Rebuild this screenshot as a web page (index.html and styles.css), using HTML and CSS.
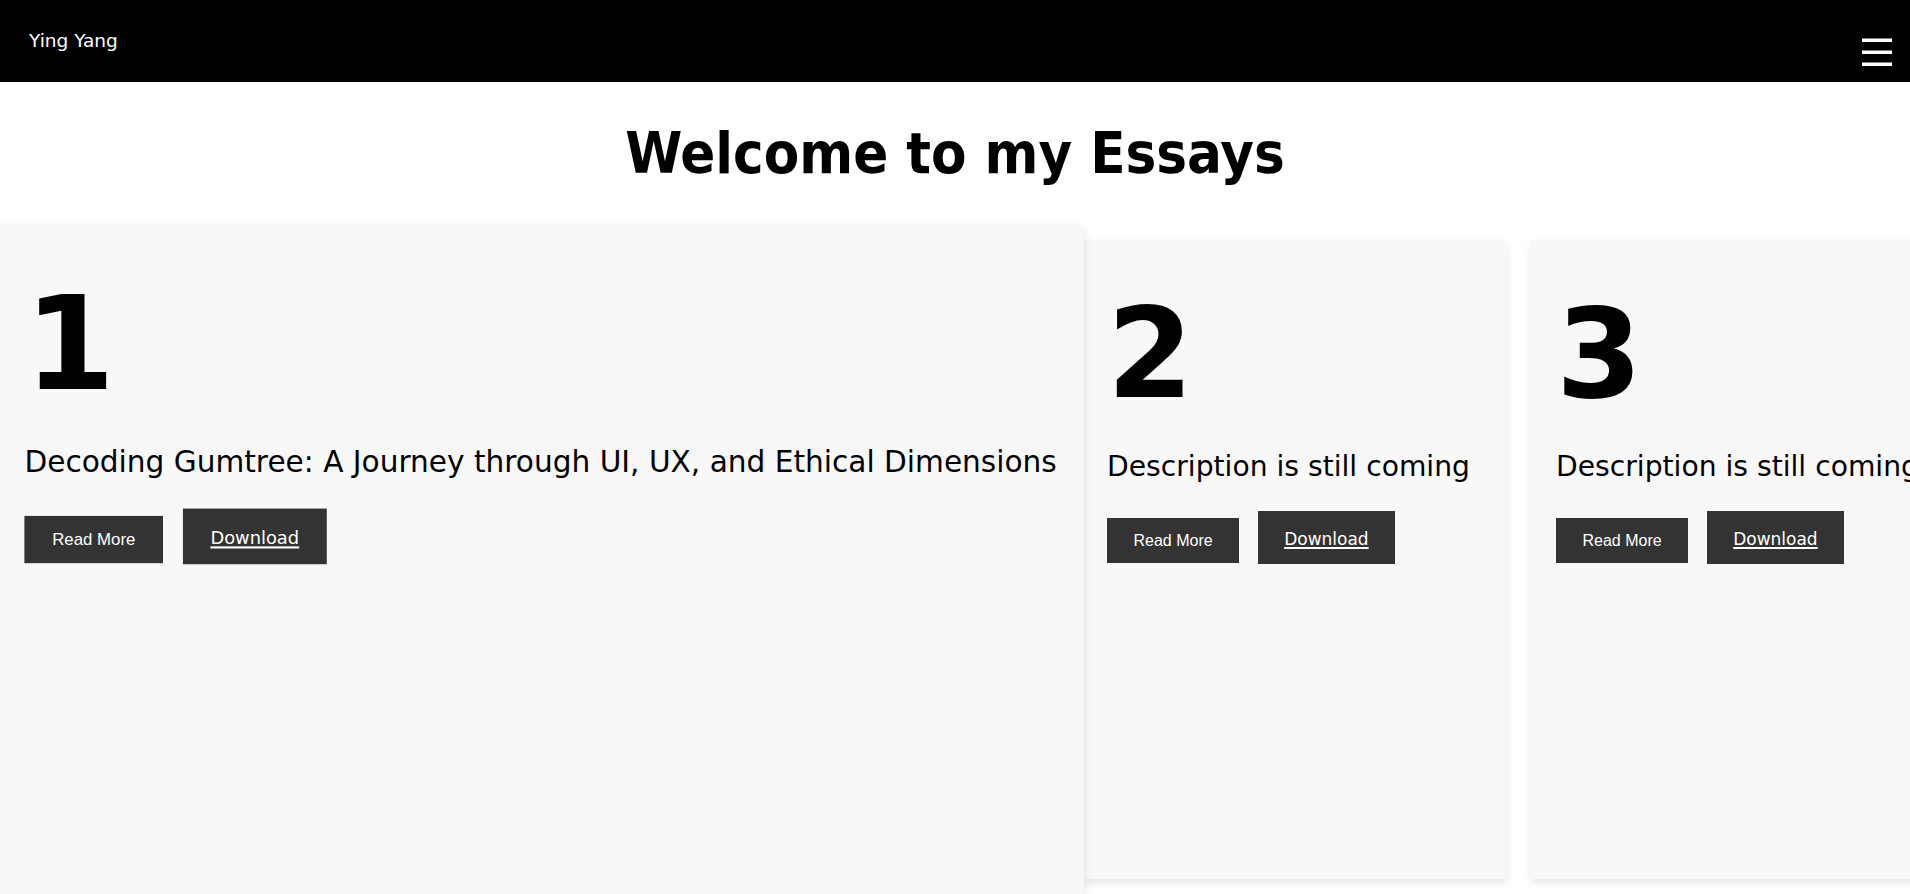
FILE: index.html
```html
<!DOCTYPE html>
<html lang="en">
<head>
<meta charset="utf-8">
<title>Ying Yang - Essays</title>
<link rel="stylesheet" href="styles.css">
</head>
<body>
<nav class="navbar">
  <a class="brand" href="#">Ying Yang</a>
  <button class="menu-toggle" aria-label="Menu">
    <svg width="30" height="28" viewBox="0 0 30 28" aria-hidden="true">
      <rect x="0" y="0.5" width="30" height="3.5" fill="#fff"/>
      <rect x="0" y="12.5" width="30" height="3.5" fill="#fff"/>
      <rect x="0" y="24.5" width="30" height="3.5" fill="#fff"/>
    </svg>
  </button>
</nav>

<main>
  <h1 class="page-title">Welcome to my Essays</h1>

  <section class="cards">
    <article class="card card--wide card--active">
      <div class="card-number">1</div>
      <p class="card-desc">Decoding Gumtree: A Journey through UI, UX, and Ethical Dimensions</p>
      <div class="card-actions">
        <button class="btn btn-read">Read More</button>
        <button class="btn btn-download"><a href="#">Download</a></button>
      </div>
    </article>

    <article class="card">
      <div class="card-number">2</div>
      <p class="card-desc">Description is still coming</p>
      <div class="card-actions">
        <button class="btn btn-read">Read More</button>
        <button class="btn btn-download"><a href="#">Download</a></button>
      </div>
    </article>

    <article class="card">
      <div class="card-number">3</div>
      <p class="card-desc">Description is still coming</p>
      <div class="card-actions">
        <button class="btn btn-read">Read More</button>
        <button class="btn btn-download"><a href="#">Download</a></button>
      </div>
    </article>
  </section>
</main>
</body>
</html>
```

FILE: styles.css
```css
html {
  overflow: hidden;
}

body {
  margin: 0;
  padding: 0;
  background: #ffffff;
  font-family: "Comic Sans MS", "DejaVu Sans", sans-serif;
  color: #000;
}

.navbar {
  height: 82px;
  background: #000;
  display: flex;
  justify-content: space-between;
  align-items: center;
  padding: 0 18px 0 29px;
}

.brand {
  color: #fff;
  text-decoration: none;
  font-size: 18.5px;
  line-height: 20px;
}

.menu-toggle {
  align-self: flex-end;
  margin-bottom: 16px;
  background: none;
  border: 0;
  padding: 0;
  width: 30px;
  height: 28px;
  display: block;
}

.menu-toggle svg {
  display: block;
}

.page-title {
  margin: 38px 0 52px;
  text-align: center;
  font-family: "Comic Sans MS", "DejaVu Sans Condensed", "DejaVu Sans", sans-serif;
  font-stretch: condensed;
  font-weight: bold;
  font-size: 57.5px;
  line-height: 68px;
}

.cards {
  display: flex;
  gap: 24px;
  padding: 0 0 40px 24px;
  align-items: flex-start;
}

.card {
  flex: none;
  box-sizing: border-box;
  width: 425px;
  height: 639px;
  padding: 52px 25px 0;
  background: #f8f8f8;
  box-shadow: 0 4px 8px rgba(0, 0, 0, 0.1);
}

.card--wide {
  width: 1034px;
}

.card--active {
  transform: scale(1.05);
}

.card-number {
  font-weight: bold;
  font-size: 124px;
  line-height: 124px;
}

.card-desc {
  margin: 34px 0 0;
  font-size: 28.2px;
  line-height: 34px;
  white-space: nowrap;
}

.card-actions {
  margin-top: 27px;
  display: flex;
  align-items: flex-end;
  gap: 19px;
}

.btn {
  border: 0;
  background: #333333;
  color: #fff;
  cursor: pointer;
  margin: 0;
}

.btn-read {
  font-family: "Liberation Sans", Arial, sans-serif;
  font-size: 16px;
  line-height: 19px;
  padding: 13px 26.5px;
  margin-bottom: 1px;
}

.btn-download {
  font-family: "Comic Sans MS", "DejaVu Sans", sans-serif;
  font-size: 17px;
  line-height: 21px;
  padding: 17.5px 26px 14.5px;
}

.btn-download a {
  color: #fff;
  text-decoration: underline;
  text-decoration-thickness: 2px;
  text-underline-offset: 2px;
}
```
